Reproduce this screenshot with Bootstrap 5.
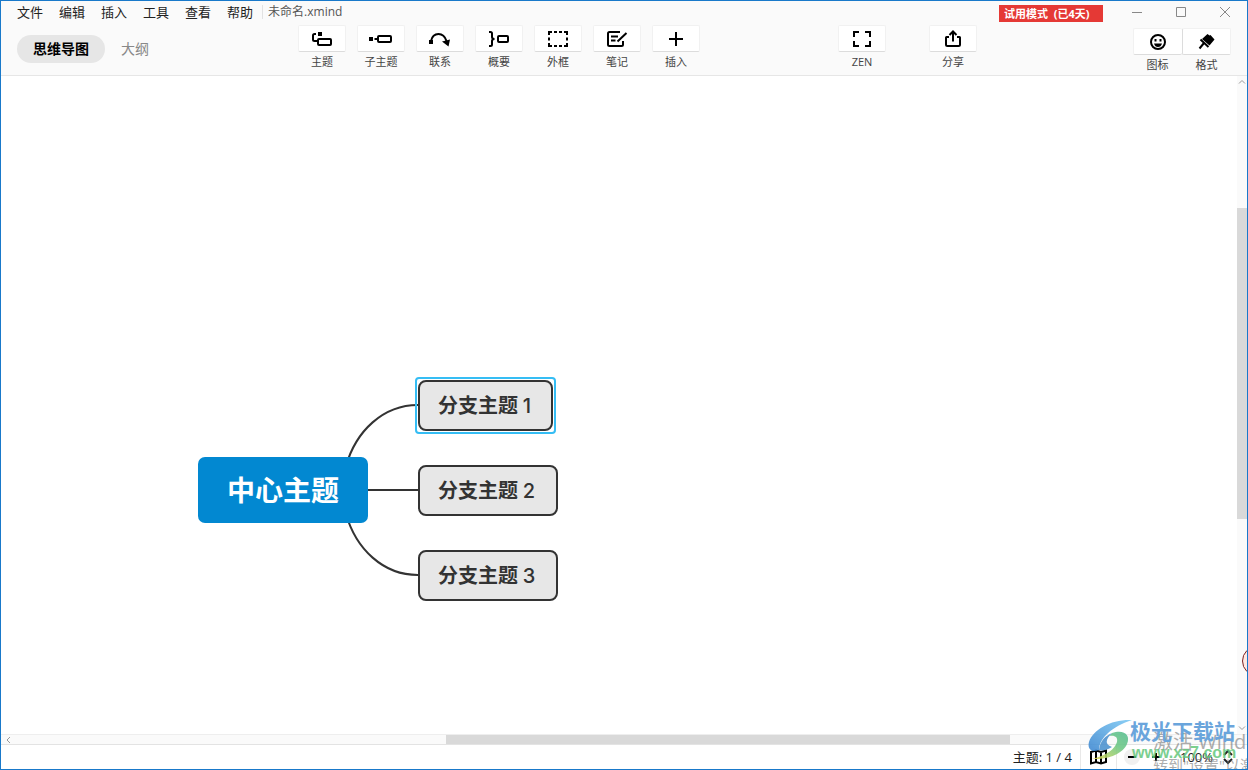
<!DOCTYPE html>
<html lang="zh-CN">
<head>
<meta charset="utf-8">
<meta name="viewport" content="width=device-width, initial-scale=1">
<title>未命名.xmind</title>
<link href="https://cdn.jsdelivr.net/npm/bootstrap@5.3.0/dist/css/bootstrap.min.css" rel="stylesheet">
<style>
body{font-family:"Open Sans","Noto Sans CJK SC",sans-serif;font-size:13px;line-height:16px;color:#222}
button{color:inherit;line-height:16px}
svg{display:block;fill:none;stroke:currentColor}
.app{border:1px solid #1979ca;height:100vh;min-height:620px}
.topbar{background:#fafafa;border-bottom:1px solid #e6e6e6}
.menu-row{height:24px}
.menu-row nav{padding-top:3px}
.menu-row .bare{font-size:13px}
.bare{border:0;background:none;padding:0}
.file-name{font-size:12px;color:#555;border-left:1px solid #e2e2e2;padding-left:5px;margin-left:9px;line-height:14px}
.trial{background:#e53935;color:#fff;font-size:11px;font-weight:700;line-height:17px;width:104px;margin-top:4px;padding-left:5px}
.win-btn{width:44px;height:23px;color:#888}
.tool-row{height:50px;padding:0 16px}
.view-tabs{font-size:14px;margin-top:10px;height:28px}
.view-tabs button{color:#888}
.view-tabs .current{background:#e6e6e6;border-radius:14px;padding:0 16px;color:#000;font-weight:700}
.tools{gap:11px;margin-left:11px}
.extras{gap:43px;margin-right:18px}
.tool{width:48px;font-size:11px;color:#444}
.face{display:flex;align-items:center;justify-content:center;height:27px;background:#fff;border:1px solid #f1f1f1;border-bottom-color:#dcdcdc;border-radius:2px;color:#000;margin-bottom:2px;stroke-width:2}
.panels{margin-top:3px}
.panels .tool{width:49px}
.panels .tool:first-child .face{border-right:0}
.panels .tool + .tool .face{border-left-color:#dcdcdc}
.board{background:#fff;overflow:hidden}
.links{left:0;top:0;color:#333;stroke-width:2}
.topic{position:absolute;left:417px;height:51px;width:140px;padding:0 0 0 18px;border:2px solid #333;border-radius:8px;background:#e7e7e7;color:#333;font-family:Inter,"Noto Sans CJK SC",sans-serif;font-size:20px;font-weight:700;line-height:24px;text-align:left}
.topic span{font-weight:500}
.topic.first{top:304px;width:135px}
.topic.first::after{content:"";position:absolute;inset:-5px;border:2px solid #35bdf4;border-radius:4px}
.topic.second{top:389px}
.topic.third{top:474px}
.topic.center{left:197px;top:381px;width:170px;height:66px;border:0;border-radius:7px;background:#0288d1;color:#fff;font-size:28px;line-height:36px;text-align:center;padding:2px 0 0}
.vbar{width:10px;background:#fafafa;color:#999}
.vbar .thumb{position:absolute;left:0;right:0;top:20%;height:47.4%;background:#d9d9d9}
.hbar{height:11px;background:#fafafa;border-top:1px solid #eee;border-bottom:1px solid #e3e3e3;color:#999}
.hbar .thumb{position:absolute;top:0;bottom:0;left:35.7%;width:45.3%;background:#d9d9d9}
.status{height:24px;background:#fff;color:#222}
.status .cell{border-left:1px solid #e8e8e8}
.zoom-cell{gap:8px;padding:0 11px 0 7px}
.zoom-level{gap:7px;margin-left:8px}
.round{width:16px;height:16px;border-radius:8px;background:#f0f0f0;color:#000;stroke-width:2}
.helper{position:absolute;right:-25px;bottom:93px;width:30px;height:30px;border:1px solid #7a2020;border-radius:50%;background:#ffe9e3}
.mark-layer{position:absolute;right:0;bottom:0;width:160px;height:52px;overflow:hidden;pointer-events:none;white-space:nowrap}
.mark-layer > *{position:absolute}
.mark-layer svg{left:0;top:2px;stroke:none;opacity:.88}
.site{left:43px;top:1px;font-size:21px;line-height:26px;font-weight:700;color:#6aa5dc}
.url{left:45px;top:26px;font-family:"Liberation Sans",sans-serif;font-size:16px;line-height:20px;font-weight:700;color:#65c77c;opacity:.85}
.act{left:66px;top:13px;font-size:20px;line-height:24px;color:#777;opacity:.6}
.act-sub{left:66px;top:39px;font-size:15px;line-height:18px;color:#777;opacity:.6}
</style>
</head>
<body>
<div class="app d-flex flex-column position-relative overflow-hidden">
<header class="topbar">
  <div class="menu-row d-flex align-items-start">
    <nav class="d-flex gap-3 ps-3" aria-label="菜单">
      <button class="bare">文件</button><button class="bare">编辑</button><button class="bare">插入</button><button class="bare">工具</button><button class="bare">查看</button><button class="bare">帮助</button>
    </nav>
    <div class="file-name mt-1">未命名.xmind</div>
    <div class="trial ms-auto me-2">试用模式&nbsp; (已4天)</div>
    <div class="d-flex ms-1">
      <button class="bare win-btn d-flex align-items-center justify-content-center" aria-label="最小化"><svg width="12" height="12"><path d="M1 5.500h10"/></svg></button>
      <button class="bare win-btn d-flex align-items-center justify-content-center" aria-label="最大化"><svg width="12" height="12"><path d="M1.500 .5h9v9h-9z"/></svg></button>
      <button class="bare win-btn d-flex align-items-center justify-content-center" aria-label="关闭"><svg width="12" height="12"><path d="M1 0l10 10M11 0L1 10"/></svg></button>
    </div>
  </div>
  <div class="tool-row d-flex justify-content-between align-items-start">
    <div class="view-tabs d-flex gap-3"><button class="bare current">思维导图</button><button class="bare">大纲</button></div>
    <div class="tools d-flex">
      <button class="bare tool"><span class="face"><svg width="24" height="20"><rect x="8" y="10" width="13" height="6" rx="1"/><path d="M6 5H4.500Q3 5 3 6.500V10.500Q3 12 4.500 12H7"/><path d="M8 3h4v4H8z" fill="currentColor" stroke="none"/></svg></span>主题</button>
      <button class="bare tool"><span class="face"><svg width="24" height="20"><path d="M0 8h4v4H0z" fill="currentColor" stroke="none"/><path d="M5.500 10H9"/><rect x="9" y="7" width="13" height="6" rx="1"/></svg></span>子主题</button>
      <button class="bare tool"><span class="face"><svg width="24" height="20"><path d="M3 12C4 7.500 7 5 10.500 5S17 7.500 18.500 12"/><path d="M1 11h4v4H1zM14 12.500l8-2-1.500 7z" fill="currentColor" stroke="none"/></svg></span>联系</button>
      <button class="bare tool"><span class="face"><svg width="24" height="20"><path d="M2 3H3.500Q5 3 5 4.500V8Q5 10 7.500 10Q5 10 5 12V15.500Q5 17 3.500 17H2"/><rect x="11" y="7" width="10" height="6" rx="1"/></svg></span>概要</button>
      <button class="bare tool"><span class="face"><svg width="24" height="20"><path d="M3 6V3H6M8 3h3M13 3h3M18 3h3V6M21 8.500v3M21 14v3H18M16 17h-3M11 17H8M6 17H3V14M3 11.500v-3"/></svg></span>外框</button>
      <button class="bare tool"><span class="face"><svg width="24" height="20"><path d="M15 3H4.500Q3 3 3 4.500V15.500Q3 17 4.500 17H16.500Q18 17 18 15.500V12M6 7.500h7M6 11.500h4.500M12.500 12.500L21.500 4"/></svg></span>笔记</button>
      <button class="bare tool"><span class="face"><svg width="24" height="20"><path d="M5 10h14M12 3v14"/></svg></span>插入</button>
    </div>
    <div class="extras d-flex">
      <button class="bare tool"><span class="face"><svg width="24" height="20"><path d="M4 8V3H9M15 3h5V8M20 12v5H15M9 17H4V12"/></svg></span>ZEN</button>
      <button class="bare tool"><span class="face"><svg width="24" height="20"><path d="M8 8H5.500Q5 8 5 8.500V15.500Q5 17 6.500 17H17.500Q19 17 19 15.500V8.500Q19 8 18.500 8H16M12 12.500V3M8.500 6L12 2.500L15.500 6"/></svg></span>分享</button>
    </div>
    <div class="panels d-flex">
      <button class="bare tool"><span class="face"><svg width="24" height="20"><circle cx="12" cy="10" r="7"/><path d="M8.500 7h2v2.500h-2zM13.500 7h2v2.500h-2zM8 11.500h8Q15 15 12 15T8 11.500z" fill="currentColor" stroke="none"/></svg></span>图标</button>
      <button class="bare tool"><span class="face"><svg width="24" height="20"><path d="M12.500 2L14.500 3.500L15.500 3L19.500 7.500L14.500 13.500L7 7z" fill="currentColor" stroke="none"/><path d="M5.500 7.500L13.500 15M9 11L4.500 16.500"/></svg></span>格式</button>
    </div>
  </div>
</header>
<div class="d-flex flex-grow-1">
  <main class="board position-relative flex-grow-1">
    <svg class="links position-absolute" width="430" height="510"><path d="M345 390C355 355 382 329 417 329M360 414H417M345 438C355 473 382 499 417 499"/></svg>
    <button class="topic center">中心主题</button>
    <button class="topic first">分支主题 <span>1</span></button>
    <button class="topic second">分支主题 <span>2</span></button>
    <button class="topic third">分支主题 <span>3</span></button>
  </main>
  <div class="vbar position-relative d-flex flex-column justify-content-between align-items-center py-1">
    <svg width="8" height="4"><path d="M1 3.500L4 .5L7 3.500"/></svg><div class="thumb"></div>
    <svg width="8" height="4"><path d="M1 .5L4 3.500L7 .5"/></svg>
  </div>
</div>
<div class="hbar position-relative d-flex align-items-center ps-1"><svg width="6" height="8"><path d="M5 1L2 4L5 7"/></svg><div class="thumb"></div></div>
<footer class="status d-flex justify-content-end align-items-stretch">
  <div class="align-self-center pe-2">主题: 1 / 4</div>
  <button class="bare cell px-2 text-black" aria-label="导航图"><svg width="19" height="16" stroke-width="2"><path d="M2 3L7 1.500L12 3L17 1.500V13L12 14.500L7 13L2 14.500zM7 2v11M12 3v11"/></svg></button>
  <div class="cell zoom-cell d-flex align-items-center">
    <button class="bare round" aria-label="缩小"><svg width="16" height="16"><path d="M4 8h8"/></svg></button>
    <button class="bare round bg-white" aria-label="放大"><svg width="16" height="16"><path d="M4 8h8M8 4v8"/></svg></button>
    <button class="bare zoom-level d-flex align-items-center">100% <svg width="16" height="16" stroke-width="2"><path d="M4 6l4-4l4 4M4 10l4 4l4-4"/></svg></button>
  </div>
</footer>
<div class="helper"></div>
<div class="mark-layer">
  <svg width="46" height="42" viewBox="0 0 46 42">
    <defs><linearGradient id="sky" x1="0" y1="1" x2="1" y2="0"><stop stop-color="#3b86d0"/><stop offset="1" stop-color="#7cc9f4"/></linearGradient><linearGradient id="leaf" x1="0" y1="1" x2="1" y2="0"><stop stop-color="#e6db55"/><stop offset=".6" stop-color="#6cc784"/><stop offset="1" stop-color="#54bd91"/></linearGradient></defs>
    <path d="M45 1C25 0 6 10 2 23C0 30 5 34 12 31C12 19 26 7 45 1z" fill="url(#sky)"/>
    <path d="M25 14C37 10 44 16 40 25C36 35 20 41 5 40C20 36 28 30 30 23C31 18 28 16 22 17z" fill="url(#leaf)"/>
    <path d="M12 31C13 22 18 17 25 14C19 20 17 25 25 28C20 31 16 32 12 31z" fill="#4b91cf"/>
  </svg>
  <div class="act">激活 Windows</div>
  <div class="act-sub">转到"设置"以激活 Windows。</div>
  <div class="site">极光下载站</div>
  <div class="url">www.xz7.com</div>
</div>
</div>
<script src="https://cdn.jsdelivr.net/npm/bootstrap@5.3.0/dist/js/bootstrap.bundle.min.js"></script>
</body>
</html>
